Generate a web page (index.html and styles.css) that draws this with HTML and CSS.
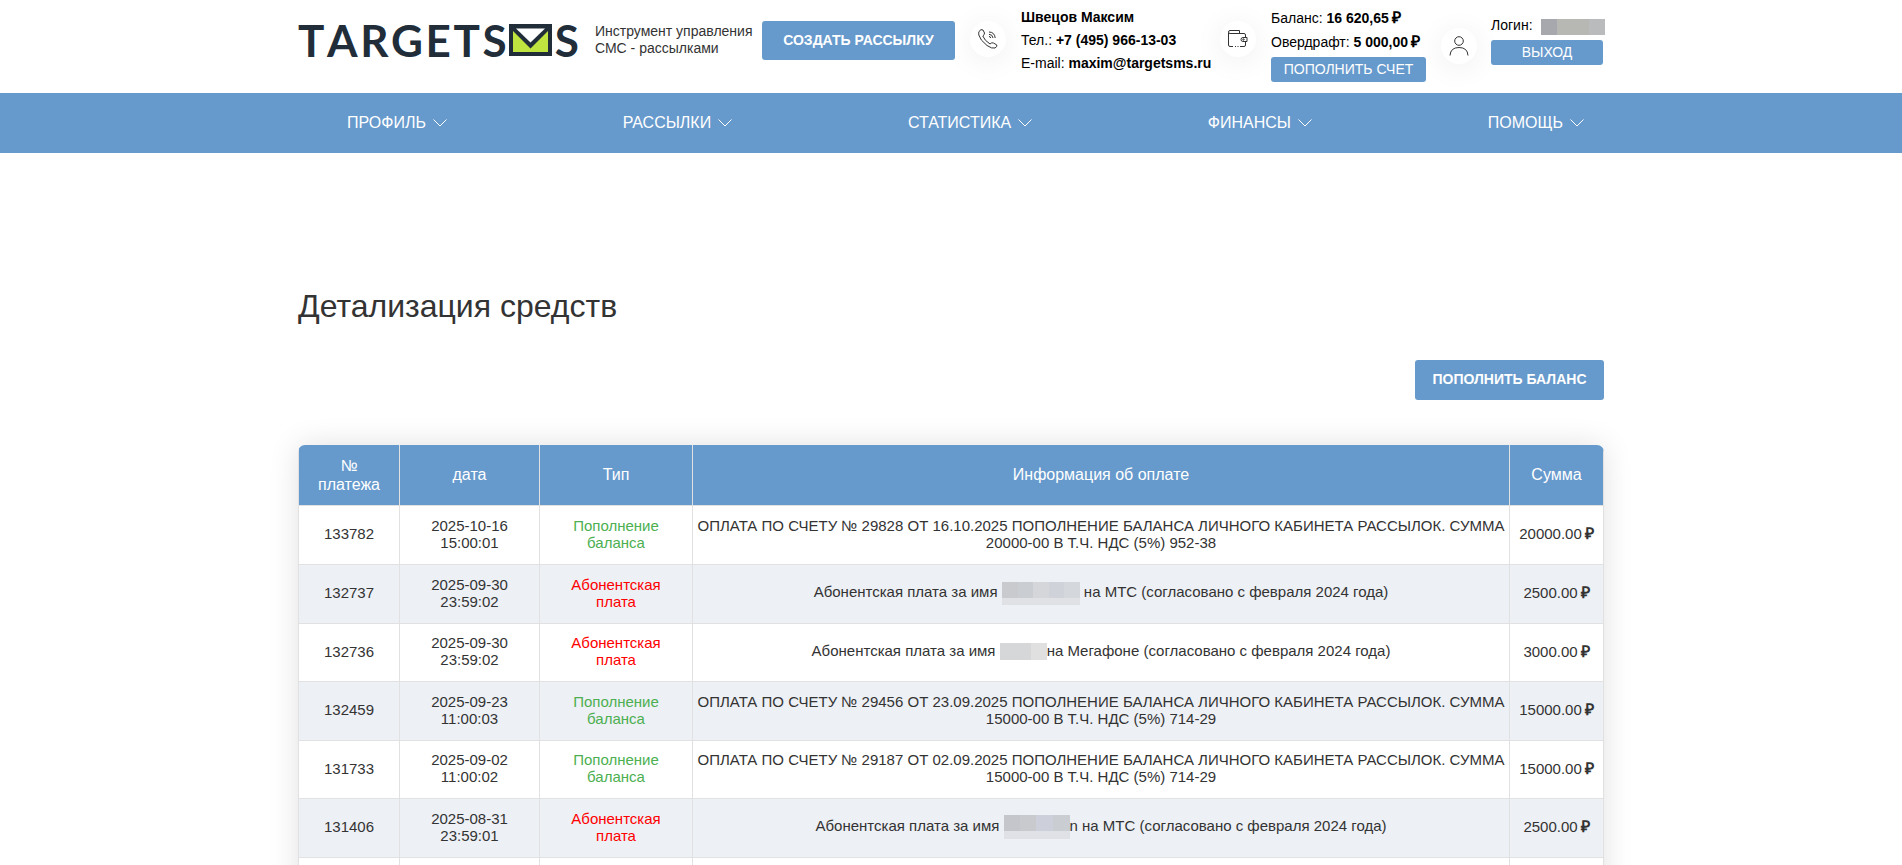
FILE: index.html
```
<!DOCTYPE html>
<html lang="ru">
<head>
<meta charset="utf-8">
<title>Детализация средств</title>
<link rel="stylesheet" href="styles.css">
</head>
<body>
<header class="header container">
  <a class="logo" href="#" aria-label="TARGETSMS">
    <span>T</span><span>A</span><span>R</span><span>G</span><span>E</span><span>T</span><span>S</span>
    <svg class="logo-mail" viewBox="0 0 43 32" aria-hidden="true">
      <path d="M0 0H43V32H0Z" fill="#212e3a"/>
      <path d="M4 7L21.500 24.500L39 7V28H4Z" fill="#bfe33f"/>
      <path d="M7 4.500H36L21.500 18.500Z" fill="#fff"/>
    </svg>
    <span>S</span>
  </a>
  <p class="slogan">Инструмент управления<br>СМС - рассылками</p>
  <button class="btn btn-create">СОЗДАТЬ РАССЫЛКУ</button>
  <div class="info info-manager">
    <span class="circle">
      <svg width="20" height="20" viewBox="0 0 20 20" class="icon" aria-hidden="true">
        <path d="M1 2.500Q3-.5 5 1L6.500 4Q6.500 6 4.800 7Q6.500 11.500 12 15Q13.500 13.200 15.500 14L18.800 16Q19.500 17.500 17 19Q14 20 9 16.500Q2 11 .8 6Q.5 4 1 2.500Z"/>
        <path d="M11 7.500Q12.500 7.500 12.700 9M11 5.300Q14.500 5.300 15 9M11 3Q16.500 3 17.200 9"/>
      </svg>
    </span>
    <div class="lines">
      <b>Швецов Максим</b>
      <span>Тел.: <b>+7 (495) 966-13-03</b></span>
      <span>E-mail: <b>maxim@targetsms.ru</b></span>
    </div>
  </div>
  <div class="info info-balance">
    <span class="circle">
      <svg width="20" height="20" viewBox="0 0 20 20" class="icon" aria-hidden="true">
        <path d="M.5 4V16Q.5 17.500 2 17.500H5M7 17.500H8M9.500 17.500H10.500M12 17.500H16Q17.500 17.500 17.500 16V12.500M17.500 8.500V6Q17.500 4.500 16 4.500H2Q.5 4.500 .5 3Q.5 1.500 2 1.500H11.500V4.500"/>
        <path d="M19 8.500H15Q13 8.500 13 10.500Q13 12.500 15 12.500H19Z"/>
        <circle cx="15.500" cy="10.500" r=".7"/>
      </svg>
    </span>
    <div class="lines">
      <span>Баланс: <b>16 620,65<span class="rub">₽</span></b></span>
      <span>Овердрафт: <b>5 000,00<span class="rub">₽</span></b></span>
      <button class="btn btn-small">ПОПОЛНИТЬ СЧЕТ</button>
    </div>
  </div>
  <div class="info info-login">
    <span class="circle">
      <svg width="20" height="20" viewBox="0 0 20 20" class="icon" aria-hidden="true">
        <circle cx="10" cy="5" r="4.300"/>
        <path d="M1 19.500Q1.500 11.500 10 11.500Q18.500 11.500 19 19.500"/>
      </svg>
    </span>
    <div class="lines">
      <span class="login">Логин: <span class="mask mask-login"></span></span>
      <button class="btn btn-small">ВЫХОД</button>
    </div>
  </div>
</header>

<nav class="nav">
  <div class="nav-row container">
    <a href="#">ПРОФИЛЬ <svg class="chev" viewBox="0 0 14 8"><path d="M.5.5L7 7L13.500.5"/></svg></a>
    <a href="#">РАССЫЛКИ <svg class="chev" viewBox="0 0 14 8"><path d="M.5.5L7 7L13.500.5"/></svg></a>
    <a href="#">СТАТИСТИКА <svg class="chev" viewBox="0 0 14 8"><path d="M.5.5L7 7L13.500.5"/></svg></a>
    <a href="#">ФИНАНСЫ <svg class="chev" viewBox="0 0 14 8"><path d="M.5.5L7 7L13.500.5"/></svg></a>
    <a href="#">ПОМОЩЬ <svg class="chev" viewBox="0 0 14 8"><path d="M.5.5L7 7L13.500.5"/></svg></a>
  </div>
</nav>

<main class="container">
  <h1>Детализация средств</h1>
  <div class="actions"><button class="btn btn-balance">ПОПОЛНИТЬ БАЛАНС</button></div>
  <div class="card">
    <table>
      <colgroup><col class="c-num"><col class="c-date"><col class="c-type"><col><col class="c-sum"></colgroup>
      <thead>
        <tr><th>№ платежа</th><th>дата</th><th>Тип</th><th>Информация об оплате</th><th>Сумма</th></tr>
      </thead>
      <tbody>
        <tr><td>133782</td><td>2025-10-16<br>15:00:01</td><td class="in">Пополнение<br>баланса</td><td>ОПЛАТА ПО СЧЕТУ № 29828 ОТ 16.10.2025 ПОПОЛНЕНИЕ БАЛАНСА ЛИЧНОГО КАБИНЕТА РАССЫЛОК. СУММА 20000-00 В Т.Ч. НДС (5%) 952-38</td><td>20000.00<b class="rub">₽</b></td></tr>
        <tr><td>132737</td><td>2025-09-30<br>23:59:02</td><td class="out">Абонентская<br>плата</td><td>Абонентская плата за имя <span class="mask mask-a"></span> на МТС (согласовано с февраля 2024 года)</td><td>2500.00<b class="rub">₽</b></td></tr>
        <tr><td>132736</td><td>2025-09-30<br>23:59:02</td><td class="out">Абонентская<br>плата</td><td>Абонентская плата за имя <span class="mask mask-b"></span>на Мегафоне (согласовано с февраля 2024 года)</td><td>3000.00<b class="rub">₽</b></td></tr>
        <tr><td>132459</td><td>2025-09-23<br>11:00:03</td><td class="in">Пополнение<br>баланса</td><td>ОПЛАТА ПО СЧЕТУ № 29456 ОТ 23.09.2025 ПОПОЛНЕНИЕ БАЛАНСА ЛИЧНОГО КАБИНЕТА РАССЫЛОК. СУММА 15000-00 В Т.Ч. НДС (5%) 714-29</td><td>15000.00<b class="rub">₽</b></td></tr>
        <tr><td>131733</td><td>2025-09-02<br>11:00:02</td><td class="in">Пополнение<br>баланса</td><td>ОПЛАТА ПО СЧЕТУ № 29187 ОТ 02.09.2025 ПОПОЛНЕНИЕ БАЛАНСА ЛИЧНОГО КАБИНЕТА РАССЫЛОК. СУММА 15000-00 В Т.Ч. НДС (5%) 714-29</td><td>15000.00<b class="rub">₽</b></td></tr>
        <tr><td>131406</td><td>2025-08-31<br>23:59:01</td><td class="out">Абонентская<br>плата</td><td>Абонентская плата за имя <span class="mask mask-c"></span>n на МТС (согласовано с февраля 2024 года)</td><td>2500.00<b class="rub">₽</b></td></tr>
        <tr><td></td><td></td><td></td><td></td><td></td></tr>
      </tbody>
    </table>
  </div>
</main>
</body>
</html>
```
FILE: styles.css
```
* { box-sizing: border-box; }
html { overflow: hidden; }
body {
  margin: 0;
  background: #fff;
  color: #333;
  font-family: "Liberation Sans", Arial, sans-serif;
  font-size: 15px;
}
.container { max-width: 1306px; margin: 0 auto; }
a { color: inherit; text-decoration: none; }

.header {
  display: flex;
  align-items: flex-start;
  height: 93px;
  color: #000;
  font-size: 14px;
}
.header > * { flex: none; }
.logo {
  display: flex;
  width: 281px;
  margin-top: 12px;
  justify-content: space-between;
  color: #212e3a;
  font: bold 44px/56px Lato, sans-serif;
}
.logo-mail { width: 43px; height: 32px; margin-top: 12px; }
.slogan { width: 183px; margin: 23px 0 0; padding-left: 16px; color: #333; line-height: 17px; white-space: nowrap; }

.btn {
  border: 0;
  border-radius: 3px;
  background: #69c;
  color: #fff;
  font: bold 14px/16px "Liberation Sans", Arial, sans-serif;
  padding: 0 0 2px;
  white-space: nowrap;
}
.btn-create { width: 193px; height: 39px; margin-top: 21px; }
.btn-small { height: 25px; font-weight: normal; }
.btn-balance { width: 189px; height: 40px; }

.info { display: flex; gap: 15px; margin-left: 15px; }
.circle {
  display: flex;
  flex: none;
  align-items: center;
  justify-content: center;
  width: 36px;
  height: 36px;
  border-radius: 50%;
  background: #fff;
  box-shadow: 0 4px 30px rgba(0, 0, 0, .07);
}
.icon { fill: none; stroke: #333; stroke-width: 1; }
.lines { display: flex; flex-direction: column; white-space: nowrap; }
.info-manager { width: 235px; }
.info-manager .circle, .info-balance .circle { margin-top: 21px; }
.info-manager .lines { padding-top: 6px; line-height: 23px; }
.info-balance .lines { width: 155px; padding-top: 6px; line-height: 24px; }
.info-balance .btn { margin-top: 3px; }
.info-login { gap: 14px; }
.info-login .circle { margin-top: 28px; }
.info-login .lines { width: 112px; padding-top: 16px; line-height: 18px; }
.info-login .btn { margin-top: 5px; }
.login { display: flex; gap: 8px; }
.rub { margin-left: 3px; font-size: 16px; line-height: 16px; }

.mask { display: inline-block; vertical-align: middle; }
.mask-login { flex: none; width: 64px; height: 16px; margin-top: 3px; background: linear-gradient(90deg, #a7a8ad 25%, #b7b7b3 25% 75%, #babbbd 75%); }
.mask-a { width: 78px; height: 23px; margin: -3px 0; background: linear-gradient(#0000 70%, #dfe1e5 70%), linear-gradient(90deg, #c9cace 20%, #cacdd2 20% 40%, #d5d6da 40% 60%, #cfd2d8 60% 80%, #d4d7dc 80%); }
.mask-b { width: 47px; height: 17px; background: linear-gradient(90deg, #d6d7d9 66%, #e0e0e0 66%); }
.mask-c { width: 66px; height: 24px; margin: -3px 0; background: linear-gradient(#0000 66%, #dfe1e6 66%), linear-gradient(90deg, #c5c6cb 25%, #c9cace 25% 48%, #cdd0da 48% 75%, #cacdd2 75%); }

.nav { background: #69c; color: #fff; }
.nav-row { display: flex; align-items: center; justify-content: space-between; height: 60px; padding: 0 20px 0 49px; font-size: 16px; }
.nav a { display: flex; align-items: center; gap: 7px; }
.chev { width: 14px; height: 8px; fill: none; stroke: #fff; stroke-width: 1; }

h1 { margin: 133px 0 0; font-size: 32px; font-weight: normal; line-height: 40px; }
.actions { display: flex; justify-content: flex-end; margin: 34px 0 45px; }

.card { border-radius: 7px; box-shadow: 0 0 30px rgba(0, 0, 0, .12); overflow: hidden; }
table { width: 100%; border-collapse: collapse; table-layout: fixed; }
.c-num { width: 101px; }
.c-date { width: 140px; }
.c-type { width: 153px; }
.c-sum { width: 94px; }
th, td { border: 1px solid #e1e1e1; text-align: center; }
th { height: 60px; padding: 0 15px; border-top: 0; background: #69c; color: #fff; font-size: 16px; font-weight: normal; line-height: 19px; }
td { height: 59px; padding: 0 2px 2px; background: #fff; line-height: 17px; }
tr:nth-child(2n+3) td { height: 58px; }
tr:nth-child(even) td { background: #edf0f5; }
td.in { color: #4caf50; }
td.out { color: #f00; }
```
